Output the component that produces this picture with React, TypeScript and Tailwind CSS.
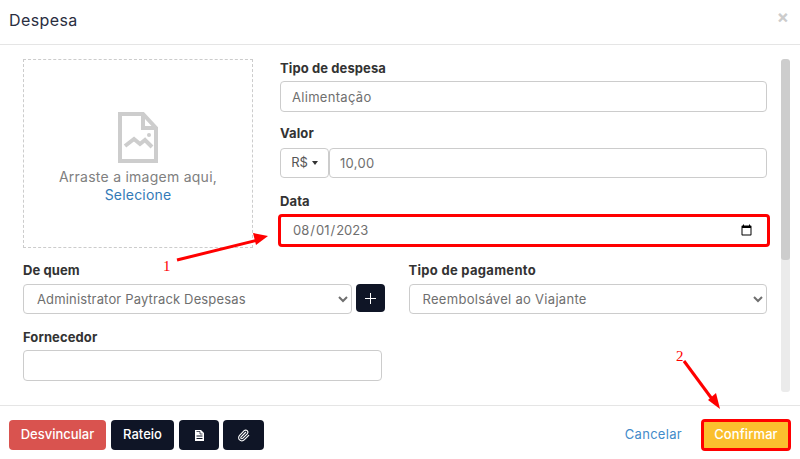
import { Paperclip } from "lucide-react";

const font = "font-['Inter','Noto_Sans',sans-serif]";
const labelCls = "block text-[13px] leading-[18px] font-bold text-[#333] tracking-[0.1px]";
const fieldCls = "block w-full rounded border border-[#ccc] bg-white text-[13px] text-[#6f6f6f] outline-none tracking-[0.3px]";
const darkBtn = "h-[30px] rounded bg-[#0f1526] text-white flex items-center justify-center";

function FileIcon() {
  return (
    <svg width="40" height="51" viewBox="0 0 40 51" fill="none">
      <path d="M2 2H25L38 16V49H2Z" stroke="#cdcdcd" strokeWidth="4" />
      <path d="M25 3V16H37" stroke="#cdcdcd" strokeWidth="4" />
      <path d="M7 34L16 27L22 32L27 28L34 35" stroke="#cdcdcd" strokeWidth="4" />
      <circle cx="31" cy="23" r="2" fill="#cdcdcd" />
    </svg>
  );
}

function DocIcon() {
  return (
    <svg width="9" height="11" viewBox="0 0 9 11" fill="none">
      <path d="M0 0H6L9 3V11H0Z" fill="#fff" />
      <path d="M1.5 1.5H5V4H7.5" stroke="#0f1526" strokeWidth="0.7" />
      <path d="M1.5 6H7.5M1.5 8.5H7.5" stroke="#0f1526" strokeWidth="1" />
    </svg>
  );
}

export default function App() {
  return (
    <div className={`${font} w-[800px] h-[459px] bg-white relative overflow-hidden flex flex-col`}>
      <header className="h-[45px] shrink-0 border-b border-[#e5e5e5] flex items-center justify-between pl-[9px] pr-[11px]">
        <h1 className="text-[16px] text-[#2a2e3f] tracking-[0.4px] font-normal -mt-[4px]">Despesa</h1>
        <span className="text-[#ccc] text-[18px] font-bold leading-none -mt-[10px]">×</span>
      </header>

      <div className="h-[360px] shrink-0 flex">
        <main className="w-[781px] pt-[14px] pl-[23px] pr-[14px]">
          <div className="flex gap-[27px]">
            <div className="w-[230px] h-[189px] border border-dashed border-[#ccc] flex flex-col items-center pt-[52px]">
              <FileIcon />
              <p className="mt-[5px] text-[14px] leading-[18px] text-[#808080] tracking-[0.25px]">Arraste a imagem aqui,</p>
              <a className="text-[14px] leading-[18px] text-[#337ab7] tracking-[0.2px]">Selecione</a>
            </div>
            <div className="w-[487px]">
              <label className={labelCls}>Tipo de despesa</label>
              <input className={`${fieldCls} mt-[4px] h-[31px] px-[11px]`} readOnly value="Alimentação" />
              <label className={`${labelCls} mt-[12px]`}>Valor</label>
              <div className="mt-[6px] flex">
                <button className="w-[49px] h-[30px] shrink-0 rounded border border-[#ccc] text-[13px] text-[#555] flex items-center justify-center gap-[4px]">
                  R$
                  <span className="w-0 h-0 border-x-[3.5px] border-x-transparent border-t-[4px] border-t-[#333]" />
                </button>
                <input className={`${fieldCls} h-[30px] px-[10px]`} readOnly value="10,00" />
              </div>
              <label className={`${labelCls} mt-[14px]`}>Data</label>
              <input
                type="date"
                defaultValue="2023-08-01"
                className="mt-[7px] ml-[1px] block w-[486px] h-[27px] pl-[11px] pr-[12px] bg-white text-[13px] text-[#6f6f6f] outline-[3px] outline-[#f00] rounded-[1px]"
              />
            </div>
          </div>

          <div className="mt-[13px] flex gap-[24px]">
            <div className="w-[362px]">
              <label className={labelCls}>De quem</label>
              <div className="mt-[5px] flex gap-[4px]">
                <select className={`${fieldCls} h-[30px] pl-[9px] tracking-[0.15px]`} defaultValue="a">
                  <option value="a">Administrator Paytrack Despesas</option>
                </select>
                <button className="w-[29px] h-[28px] shrink-0 rounded bg-[#0f1526] flex items-center justify-center">
                  <svg width="11" height="11" viewBox="0 0 11 11"><path d="M5.5 0V11M0 5.5H11" stroke="#fff" strokeWidth="1" /></svg>
                </button>
              </div>
              <label className={`${labelCls} mt-[14px]`}>Fornecedor</label>
              <div className="w-[359px] mt-[4px]">
                <input className={`${fieldCls} h-[31px]`} readOnly />
              </div>
            </div>
            <div className="w-[359px]">
              <label className={`${labelCls} tracking-[0.3px]`}>Tipo de pagamento</label>
              <select className={`${fieldCls} mt-[5px] h-[30px] pl-[9px]`} defaultValue="r">
                <option value="r">Reembolsável ao Viajante</option>
              </select>
            </div>
          </div>
        </main>
        <div className="mt-[14px] h-[333px] w-[9px] rounded-[3px] bg-[#ebebeb] overflow-hidden">
          <div className="h-[201px] rounded-[3px] bg-[#cdcdcd]" />
        </div>
      </div>

      <footer className="flex-1 border-t border-[#e5e5e5] flex items-center justify-between pl-[9px] pr-[12px] pt-[5px]">
        <div className="flex gap-[5px]">
          <button className="h-[30px] w-[97px] rounded bg-[#d9534f] text-white text-[13px] font-medium">Desvincular</button>
          <button className={`${darkBtn} w-[63px] text-[13px] font-medium`}>Rateio</button>
          <button className={`${darkBtn} w-[40px]`}><DocIcon /></button>
          <button className={`${darkBtn} w-[41px] -ml-[1px]`}><Paperclip size={13} strokeWidth={2} /></button>
        </div>
        <div className="flex items-center gap-[22px]">
          <a className="text-[13px] text-[#428bca] tracking-[0.3px]">Cancelar</a>
          <button className="h-[26px] w-[84px] -mt-[1px] rounded-[1px] bg-[#fbbf2e] text-white text-[13px] font-medium tracking-[0.1px] outline-[3px] outline-[#f00]">Confirmar</button>
        </div>
      </footer>

      <svg className="absolute inset-0 pointer-events-none" width="800" height="459" viewBox="0 0 800 459" fill="none">
        <path d="M177 260L258 240" stroke="#f00" strokeWidth="3" />
        <path d="M268 236L253 233L256 245Z" fill="#f00" />
        <path d="M684 361L715 403" stroke="#f00" strokeWidth="3" />
        <path d="M720 409L708 400L716 393Z" fill="#f00" />
      </svg>
      <span className="absolute left-[163px] top-[257px] font-['Liberation_Serif',serif] text-[15px] leading-[18px] text-[#f00]">1</span>
      <span className="absolute left-[676px] top-[347px] font-['Liberation_Serif',serif] text-[15px] leading-[18px] text-[#f00]">2</span>
    </div>
  );
}
